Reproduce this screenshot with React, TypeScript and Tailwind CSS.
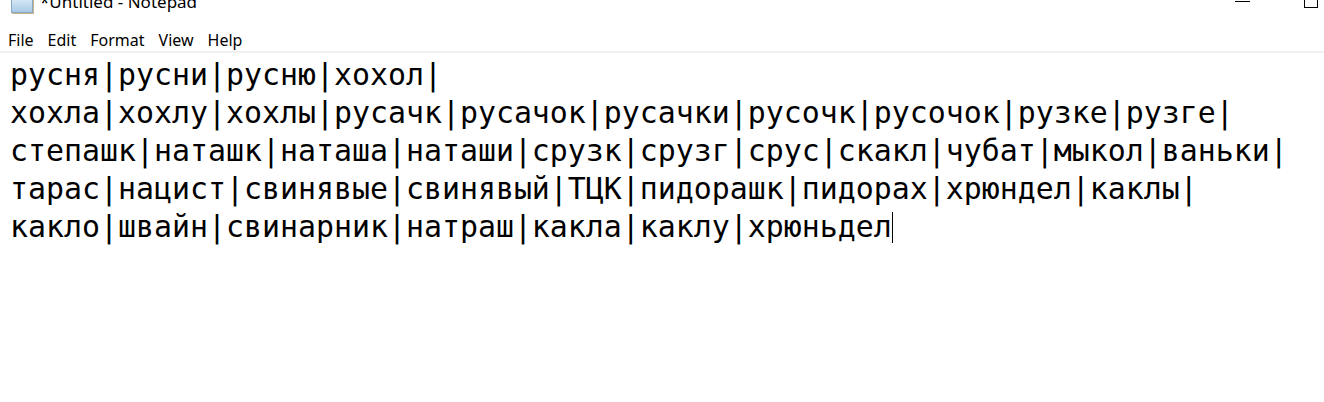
const lines = [
  'русня|русни|русню|хохол|',
  'хохла|хохлу|хохлы|русачк|русачок|русачки|русочк|русочок|рузке|рузге|',
  'степашк|наташк|наташа|наташи|срузк|срузг|срус|скакл|чубат|мыкол|ваньки|',
  'тарас|нацист|свинявые|свинявый|ТЦК|пидорашк|пидорах|хрюндел|каклы|',
  'какло|швайн|свинарник|натраш|какла|каклу|хрюньдел',
]

export default function App() {
  return (
    <div className="w-[1324px] h-[402px] overflow-hidden bg-white text-black font-['Noto_Sans',sans-serif]">
      {/* title bar, cut off at the top */}
      <div className="relative h-[28px] -mt-[10px] flex items-center">
        <div className="ml-[11px] mt-[-2px] w-[22px] h-[20px] border border-[#8aa7bf] bg-gradient-to-b from-[#e8f4fc] to-[#a9cbe6] shadow-[1px_1px_0_#c9b58f]" />
        <span className="ml-[7px] -mt-[4px] text-[17px] text-black">*Untitled - Notepad</span>
        <div className="absolute left-[1235px] top-[11px] w-[15px] h-px bg-black" />
        <div className="absolute left-[1304px] top-0 w-[14px] h-[18px] border border-black" />
      </div>

      {/* menu bar */}
      <div className="h-[23px] mt-[10px] flex items-center pl-[8px] gap-[14px] text-[16px] leading-none">
        <span>File</span>
        <span>Edit</span>
        <span>Format</span>
        <span>View</span>
        <span>Help</span>
      </div>
      <div className="h-[2px] bg-[#f0f0f0]" />

      {/* edit area */}
      <div className="pl-[10px] pt-[3px] font-['DejaVu_Sans_Mono',monospace] text-[29.9px] leading-[38px] whitespace-pre">
        {lines.map((l, i) => (
          <div key={i} className="flex items-center">
            <span>{l}</span>
            {i === lines.length - 1 && <span className="w-px h-[31px] bg-black" />}
          </div>
        ))}
      </div>
    </div>
  )
}
